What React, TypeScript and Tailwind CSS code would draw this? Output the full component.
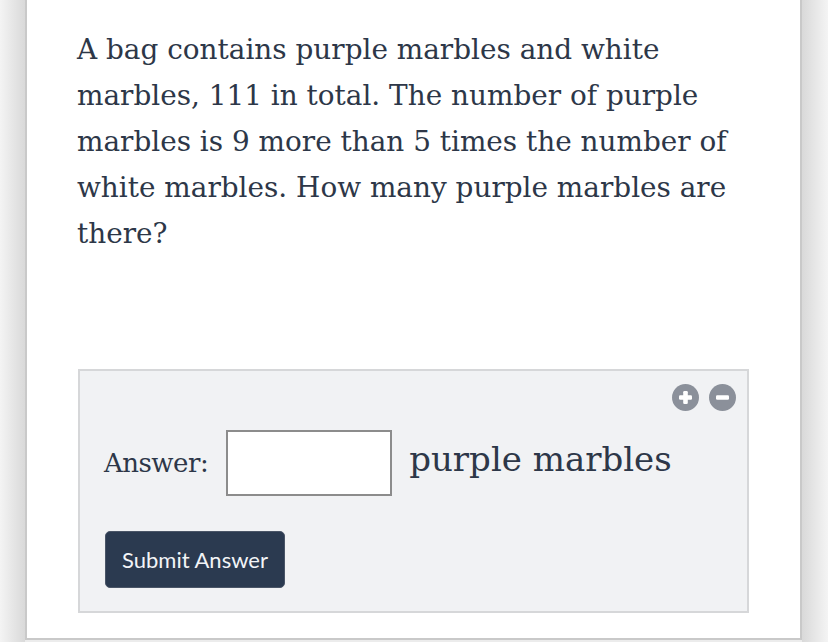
import React from "react";

export default function App() {
  const serif = { fontFamily: '"DejaVu Serif", Georgia, serif' };
  return (
    <div className="w-[828px] h-[642px] overflow-hidden bg-[#ececec] flex">
      <div className="w-[25px] h-full bg-gradient-to-r from-[#f4f4f4] to-[#d9d9d9]" />
      <div className="w-[777px] h-[640px] bg-white border-x-2 border-b-2 border-[#c9c9c9] flex flex-col">
        <p
          className="ml-[50px] mt-[27px] w-[690px] text-[27.9px] leading-[46px] text-[#2d3748]"
          style={serif}
        >
          A bag contains purple marbles and white marbles, 111 in total. The number of purple marbles is 9 more than 5 times the number of white marbles. How many purple marbles are there?
        </p>
        <div className="ml-[51px] mt-[112px] w-[671px] h-[244px] bg-[#f1f2f4] border-2 border-[#d6d7d9] flex flex-col px-[24px] pb-[24px]">
          <div className="flex justify-end gap-[10px] mt-[13px] -mr-[13px]">
            <svg width="27" height="27" viewBox="0 0 27 27">
              <circle cx="13.5" cy="13.5" r="13.5" fill="#8b909a" />
              <rect x="7" y="11.2" width="13" height="4.6" rx="1.2" fill="#fff" />
              <rect x="11.2" y="7" width="4.6" height="13" rx="1.2" fill="#fff" />
            </svg>
            <svg width="27" height="27" viewBox="0 0 27 27">
              <circle cx="13.5" cy="13.5" r="13.5" fill="#8b909a" />
              <rect x="7" y="11.2" width="13" height="4.6" rx="1.2" fill="#fff" />
            </svg>
          </div>
          <div className="flex items-center mt-[19px]">
            <span className="text-[26px] text-[#2d3748] tracking-[-0.5px]" style={serif}>
              Answer:
            </span>
            <div className="ml-[18px] w-[166px] h-[66px] bg-white border-2 border-[#8c8c8c]" />
            <span className="ml-[17px] text-[34px] text-[#2d3748] -mt-[8px]" style={serif}>
              purple marbles
            </span>
          </div>
          <div className="mt-[35px] ml-[1px]">
            <button
              className="w-[180px] h-[57px] bg-[#2b3a50] border border-[#4a5567] rounded-[5px] text-[22px] text-[#f2f4f7]"
              style={{ fontFamily: "Lato, sans-serif" }}
            >
              Submit Answer
            </button>
          </div>
        </div>
      </div>
      <div className="flex-1 h-full bg-gradient-to-r from-[#d9d9d9] to-[#f4f4f4]" />
    </div>
  );
}
